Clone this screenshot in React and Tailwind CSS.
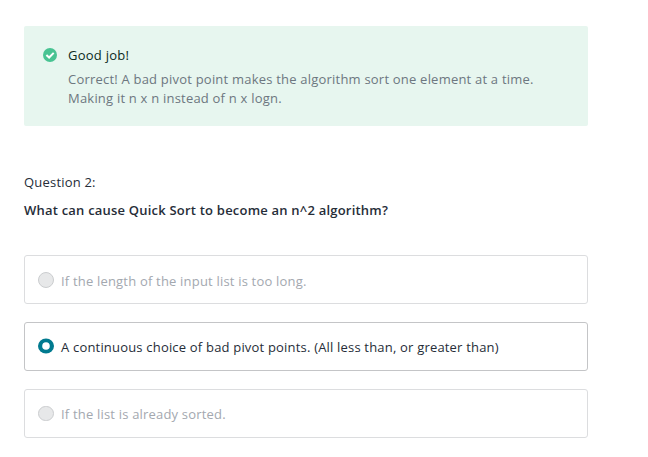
const options = [
  { text: 'If the length of the input list is too long.', selected: false, pad: 'pt-[3px]', radio: 'h-4' },
  { text: 'A continuous choice of bad pivot points. (All less than, or greater than)', selected: true, pad: 'pt-[2px]', radio: 'h-4 mb-px' },
  { text: 'If the list is already sorted.', selected: false, pad: 'pt-[2px]', radio: 'h-[15px] mb-px' },
];

function Radio({ selected, size }) {
  return selected ? (
    <svg className={'w-4 shrink-0 ' + size} viewBox="0 0 16 16">
      <ellipse cx="8" cy="8" rx="8" ry="7.6" fill="#017a8f" />
      <circle cx="8" cy="8" r="3.8" fill="white" />
    </svg>
  ) : (
    <span className={'w-4 shrink-0 rounded-full border border-[#cbcdcf] bg-[#e7e8e9] ' + size} />
  );
}

export default function App() {
  return (
    <main className="h-[457px] w-[648px] overflow-hidden bg-white pl-6 pt-[26px] font-['Open_Sans',sans-serif] text-[13px] tracking-[0.2px] text-[#262d38]">
      <section className="flex h-[100px] w-[564px] gap-[11px] rounded-[2px] bg-[#e7f6ef] pl-[19px] pt-5">
        <svg className="mt-[2px] size-[14px] shrink-0" viewBox="0 0 14 14" fill="none">
          <circle cx="7" cy="7" r="7" fill="#48c392" />
          <path d="M3.4 7 6.1 9.5 10.7 4.9" stroke="white" strokeWidth="2" />
        </svg>
        <div>
          <h2 className="leading-[19px] tracking-[0.25px] text-[#0b2a22]">Good job!</h2>
          <p className="mt-[5px] whitespace-nowrap leading-[19px] tracking-[0.21px] text-[#6d7780]">
            Correct! A bad pivot point makes the algorithm sort one element at a time.
            <br />
            Making it n x n instead of n x logn.
          </p>
        </div>
      </section>
      <p className="mt-[47px] leading-[19px]">Question 2:</p>
      <h1 className="mt-[9px] font-semibold leading-[19px] tracking-[0.21px]">What can cause Quick Sort to become an n^2 algorithm?</h1>
      <div className="mt-[35px] flex w-[564px] flex-col gap-[18px]">
        {options.map((o) => (
          <div
            key={o.text}
            className={
              'flex h-[49px] items-center gap-[7px] whitespace-nowrap rounded-[3px] border pl-[13px] ' +
              (o.selected ? 'border-[#c4c5c7] text-[#262d38]' : 'border-[#dcdddf] text-[#a3a8af]')
            }
          >
            <Radio selected={o.selected} size={o.radio} />
            <span className={'leading-[19px] tracking-[0.19px] ' + o.pad}>{o.text}</span>
          </div>
        ))}
      </div>
    </main>
  );
}
